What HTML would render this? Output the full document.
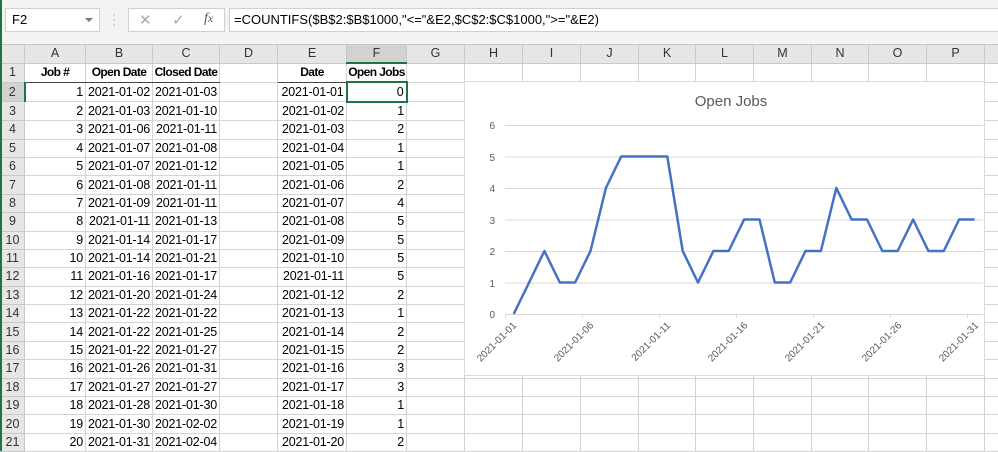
<!DOCTYPE html>
<html><head><meta charset="utf-8"><style>
body{margin:0;width:998px;height:451px;overflow:hidden;background:#fff;font-family:"Liberation Sans",sans-serif;position:relative}
.top{position:absolute;left:0;top:0;width:998px;height:44px;background:#f3f3f3;border-bottom:1px solid #d4d4d4}
.nb{position:absolute;left:5px;top:8px;width:95px;height:24px;background:#fff;border:1px solid #d0d0d0;box-sizing:border-box;font-size:13px;line-height:22px;padding-left:6px}
.nb:after{content:"";position:absolute;right:6px;top:9px;border:4px solid transparent;border-top:4px solid #777}
.btns{position:absolute;left:128px;top:8px;width:97px;height:24px;background:#fff;border:1px solid #d0d0d0;box-sizing:border-box;color:#aaa;font-size:15px}
.fx{position:absolute;left:229px;top:8px;width:769px;height:24px;background:#fff;border:1px solid #d0d0d0;border-right:none;box-sizing:border-box;font-size:13px;line-height:22px;padding-left:4px;white-space:nowrap}
table{position:absolute;left:0;top:44px;width:998px;border-collapse:collapse;table-layout:fixed;font-size:12.5px;letter-spacing:-0.2px}
td{border:1px solid #d4d4d4;height:17.4px;padding:0 2px;white-space:nowrap;overflow:hidden;line-height:17px;text-align:right}
tr.h td{background:#e6e6e6;text-align:center;height:17px;color:#333;border-color:#c8c8c8;letter-spacing:0}
td.r{background:#e6e6e6;text-align:center;color:#333;border-color:#c8c8c8;padding:0;letter-spacing:0}
tr.h1 td.b{font-weight:bold;text-align:center;border-bottom:1.5px solid #444;letter-spacing:-0.6px;padding:0;font-size:12px}
</style></head><body>
<div style="position:absolute;left:0;top:0;width:2px;height:451px;background:#217346;z-index:5"></div>
<div class="top">
<div class="nb">F2</div>
<div style="position:absolute;left:112px;top:12px;color:#aaa;font-size:12px;line-height:5px">·<br>·<br>·</div>
<div class="btns"><span style="position:absolute;left:10px;top:2px">✕</span><span style="position:absolute;left:43px;top:2px">✓</span><span style="position:absolute;left:75px;top:2px;font-family:'Liberation Serif',serif;font-style:italic;color:#555;font-size:14px">f<small>x</small></span></div>
<div class="fx">=COUNTIFS($B$2:$B$1000,"&lt;="&amp;E2,$C$2:$C$1000,"&gt;="&amp;E2)</div>
</div>
<table>
<colgroup><col style="width:24px"><col style="width:61px"><col style="width:67px"><col style="width:67px"><col style="width:58px"><col style="width:69px"><col style="width:60px"><col style="width:58px"><col style="width:58px"><col style="width:58px"><col style="width:58px"><col style="width:57px"><col style="width:58px"><col style="width:58px"><col style="width:57px"><col style="width:58px"><col style="width:58px"><col style="width:14px"></colgroup>
<tr class="h"><td></td><td>A</td><td>B</td><td>C</td><td>D</td><td>E</td><td style="background:#d2d2d2;border-bottom:2px solid #217346">F</td><td>G</td><td>H</td><td>I</td><td>J</td><td>K</td><td>L</td><td>M</td><td>N</td><td>O</td><td>P</td><td></td></tr>
<tr class="h1"><td class="r">1</td><td class="b">Job #</td><td class="b">Open Date</td><td class="b">Closed Date</td><td></td><td class="b">Date</td><td class="b">Open Jobs</td><td></td><td></td><td></td><td></td><td></td><td></td><td></td><td></td><td></td><td></td><td></td></tr>
<tr><td class="r" style="background:#d2d2d2;border-right:2px solid #217346">2</td><td>1</td><td>2021-01-02</td><td>2021-01-03</td><td></td><td>2021-01-01</td><td style="border:2px solid #217346">0</td><td></td><td></td><td></td><td></td><td></td><td></td><td></td><td></td><td></td><td></td><td></td></tr>
<tr><td class="r">3</td><td>2</td><td>2021-01-03</td><td>2021-01-10</td><td></td><td>2021-01-02</td><td>1</td><td></td><td></td><td></td><td></td><td></td><td></td><td></td><td></td><td></td><td></td><td></td></tr>
<tr><td class="r">4</td><td>3</td><td>2021-01-06</td><td>2021-01-11</td><td></td><td>2021-01-03</td><td>2</td><td></td><td></td><td></td><td></td><td></td><td></td><td></td><td></td><td></td><td></td><td></td></tr>
<tr><td class="r">5</td><td>4</td><td>2021-01-07</td><td>2021-01-08</td><td></td><td>2021-01-04</td><td>1</td><td></td><td></td><td></td><td></td><td></td><td></td><td></td><td></td><td></td><td></td><td></td></tr>
<tr><td class="r">6</td><td>5</td><td>2021-01-07</td><td>2021-01-12</td><td></td><td>2021-01-05</td><td>1</td><td></td><td></td><td></td><td></td><td></td><td></td><td></td><td></td><td></td><td></td><td></td></tr>
<tr><td class="r">7</td><td>6</td><td>2021-01-08</td><td>2021-01-11</td><td></td><td>2021-01-06</td><td>2</td><td></td><td></td><td></td><td></td><td></td><td></td><td></td><td></td><td></td><td></td><td></td></tr>
<tr><td class="r">8</td><td>7</td><td>2021-01-09</td><td>2021-01-11</td><td></td><td>2021-01-07</td><td>4</td><td></td><td></td><td></td><td></td><td></td><td></td><td></td><td></td><td></td><td></td><td></td></tr>
<tr><td class="r">9</td><td>8</td><td>2021-01-11</td><td>2021-01-13</td><td></td><td>2021-01-08</td><td>5</td><td></td><td></td><td></td><td></td><td></td><td></td><td></td><td></td><td></td><td></td><td></td></tr>
<tr><td class="r">10</td><td>9</td><td>2021-01-14</td><td>2021-01-17</td><td></td><td>2021-01-09</td><td>5</td><td></td><td></td><td></td><td></td><td></td><td></td><td></td><td></td><td></td><td></td><td></td></tr>
<tr><td class="r">11</td><td>10</td><td>2021-01-14</td><td>2021-01-21</td><td></td><td>2021-01-10</td><td>5</td><td></td><td></td><td></td><td></td><td></td><td></td><td></td><td></td><td></td><td></td><td></td></tr>
<tr><td class="r">12</td><td>11</td><td>2021-01-16</td><td>2021-01-17</td><td></td><td>2021-01-11</td><td>5</td><td></td><td></td><td></td><td></td><td></td><td></td><td></td><td></td><td></td><td></td><td></td></tr>
<tr><td class="r">13</td><td>12</td><td>2021-01-20</td><td>2021-01-24</td><td></td><td>2021-01-12</td><td>2</td><td></td><td></td><td></td><td></td><td></td><td></td><td></td><td></td><td></td><td></td><td></td></tr>
<tr><td class="r">14</td><td>13</td><td>2021-01-22</td><td>2021-01-22</td><td></td><td>2021-01-13</td><td>1</td><td></td><td></td><td></td><td></td><td></td><td></td><td></td><td></td><td></td><td></td><td></td></tr>
<tr><td class="r">15</td><td>14</td><td>2021-01-22</td><td>2021-01-25</td><td></td><td>2021-01-14</td><td>2</td><td></td><td></td><td></td><td></td><td></td><td></td><td></td><td></td><td></td><td></td><td></td></tr>
<tr><td class="r">16</td><td>15</td><td>2021-01-22</td><td>2021-01-27</td><td></td><td>2021-01-15</td><td>2</td><td></td><td></td><td></td><td></td><td></td><td></td><td></td><td></td><td></td><td></td><td></td></tr>
<tr><td class="r">17</td><td>16</td><td>2021-01-26</td><td>2021-01-31</td><td></td><td>2021-01-16</td><td>3</td><td></td><td></td><td></td><td></td><td></td><td></td><td></td><td></td><td></td><td></td><td></td></tr>
<tr><td class="r">18</td><td>17</td><td>2021-01-27</td><td>2021-01-27</td><td></td><td>2021-01-17</td><td>3</td><td></td><td></td><td></td><td></td><td></td><td></td><td></td><td></td><td></td><td></td><td></td></tr>
<tr><td class="r">19</td><td>18</td><td>2021-01-28</td><td>2021-01-30</td><td></td><td>2021-01-18</td><td>1</td><td></td><td></td><td></td><td></td><td></td><td></td><td></td><td></td><td></td><td></td><td></td></tr>
<tr><td class="r">20</td><td>19</td><td>2021-01-30</td><td>2021-02-02</td><td></td><td>2021-01-19</td><td>1</td><td></td><td></td><td></td><td></td><td></td><td></td><td></td><td></td><td></td><td></td><td></td></tr>
<tr><td class="r">21</td><td>20</td><td>2021-01-31</td><td>2021-02-04</td><td></td><td>2021-01-20</td><td>2</td><td></td><td></td><td></td><td></td><td></td><td></td><td></td><td></td><td></td><td></td><td></td></tr>
</table>
<svg style="position:absolute;left:0;top:0" width="998" height="451" font-family="Liberation Sans, sans-serif">
<rect x="464.5" y="81.5" width="520" height="294" fill="#fff" stroke="#d9d9d9"/>
<text x="731" y="106" text-anchor="middle" font-size="15" fill="#595959">Open Jobs</text>
<g stroke="#d9d9d9" stroke-width="1">
<line x1="505" x2="983" y1="125.5" y2="125.5"/><line x1="505" x2="983" y1="157" y2="157"/><line x1="505" x2="983" y1="188.5" y2="188.5"/><line x1="505" x2="983" y1="220" y2="220"/><line x1="505" x2="983" y1="251.5" y2="251.5"/><line x1="505" x2="983" y1="283" y2="283"/><line x1="505" x2="983" y1="314.5" y2="314.5"/>
<line x1="505.5" x2="505.5" y1="314" y2="318"/><line x1="582.5" x2="582.5" y1="314" y2="318"/><line x1="659.5" x2="659.5" y1="314" y2="318"/><line x1="736.5" x2="736.5" y1="314" y2="318"/><line x1="813.5" x2="813.5" y1="314" y2="318"/><line x1="890.5" x2="890.5" y1="314" y2="318"/><line x1="967.5" x2="967.5" y1="314" y2="318"/>
</g>
<g font-size="10" fill="#595959" text-anchor="end">
<text x="495" y="129">6</text><text x="495" y="161">5</text><text x="495" y="192">4</text><text x="495" y="224">3</text><text x="495" y="255">2</text><text x="495" y="287">1</text><text x="495" y="318">0</text>
</g>
<g font-size="10" fill="#595959" text-anchor="end">
<text transform="translate(517,326) rotate(-45)">2021-01-01</text>
<text transform="translate(594,326) rotate(-45)">2021-01-06</text>
<text transform="translate(671,326) rotate(-45)">2021-01-11</text>
<text transform="translate(748,326) rotate(-45)">2021-01-16</text>
<text transform="translate(825,326) rotate(-45)">2021-01-21</text>
<text transform="translate(902,326) rotate(-45)">2021-01-26</text>
<text transform="translate(979,326) rotate(-45)">2021-01-31</text>
</g>
<polyline fill="none" stroke="#4472c4" stroke-width="2.5" stroke-linejoin="round" points="513.7,314 529.1,282.5 544.4,251 559.8,282.5 575.1,282.5 590.5,251 605.9,188 621.2,156.5 636.6,156.5 651.9,156.5 667.3,156.5 682.7,251 698,282.5 713.4,251 728.7,251 744.1,219.5 759.5,219.5 774.8,282.5 790.2,282.5 805.5,251 820.9,251 836.3,188 851.6,219.5 867,219.5 882.3,251 897.7,251 913.1,219.5 928.4,251 943.8,251 959.1,219.5 974.5,219.5"/>
</svg>
</body></html>
